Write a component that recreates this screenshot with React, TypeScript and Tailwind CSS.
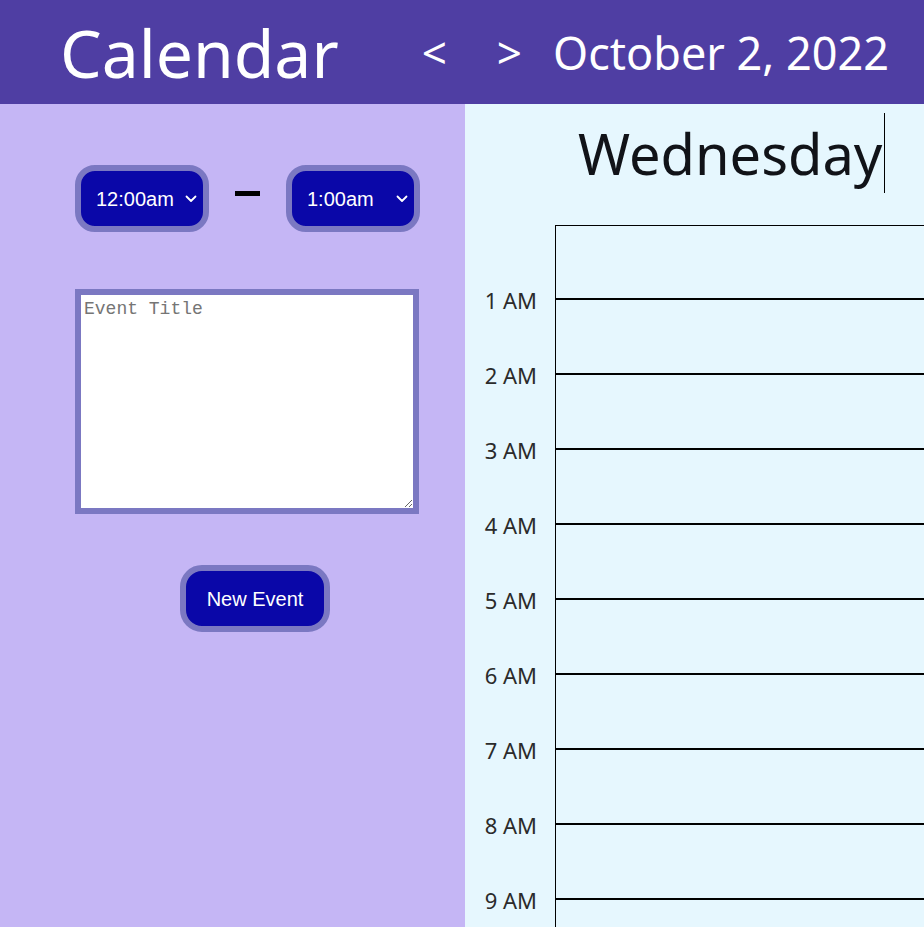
import { useState } from "react";

const hours = Array.from({ length: 24 }, (_, i) => {
  const h = i % 12 === 0 ? 12 : i % 12;
  return `${h} ${i < 12 ? "AM" : "PM"}`;
});

const times = Array.from({ length: 24 }, (_, i) => {
  const h = i % 12 === 0 ? 12 : i % 12;
  return `${h}:00${i < 12 ? "am" : "pm"}`;
});

// rows visible in the window: midnight through 9 AM
const visibleRows = 9;

function Chevron() {
  return (
    <svg width="12" height="8" viewBox="0 0 12 8" className="pointer-events-none absolute top-1/2 -translate-y-1/2 right-[12px]">
      <path d="M1.5 1.5 L6 6 L10.5 1.5" stroke="white" strokeWidth="1.8" fill="none" strokeLinecap="round" strokeLinejoin="round" />
    </svg>
  );
}

function TimeSelect({ value, onChange }: { value: string; onChange: (v: string) => void }) {
  return (
    <div className="relative">
      <select
        value={value}
        onChange={(e) => onChange(e.target.value)}
        className="appearance-none w-[134px] h-[67px] rounded-[20px] border-[6px] border-[#7b78c2] bg-[#0a07a8] text-white text-[20px] pl-[15px] pr-[20px] outline-none font-['Liberation_Sans',Arial,sans-serif]"
      >
        {times.map((t) => (
          <option key={t} value={t}>
            {t}
          </option>
        ))}
      </select>
      <Chevron />
    </div>
  );
}

export default function App() {
  const [start, setStart] = useState("12:00am");
  const [end, setEnd] = useState("1:00am");

  return (
    <div className="h-[927px] w-full overflow-hidden flex flex-col font-['Noto_Sans',sans-serif]">
      {/* Header */}
      <header className="h-[104px] shrink-0 bg-[#4f3ea3] text-white flex items-center">
        <h1 className="ml-[60px] text-[66px] leading-none">Calendar</h1>
        <button className="ml-[83px] text-[44px] leading-none">&lt;</button>
        <button className="ml-[50px] text-[44px] leading-none">&gt;</button>
        <div className="ml-[31px] text-[45px] leading-none">October 2, 2022</div>
      </header>

      <div className="flex flex-1 min-h-0">
        {/* Sidebar */}
        <aside className="w-[465px] shrink-0 bg-[#c5b6f5] pt-[61px] pl-[75px]">
          <div className="flex items-center">
            <TimeSelect value={start} onChange={setStart} />
            <div className="mx-[26px] mb-[10px] w-[25px] h-[5px] bg-black" />
            <TimeSelect value={end} onChange={setEnd} />
          </div>
          <textarea
            placeholder="Event Title"
            className="mt-[57px] block w-[344px] h-[225px] border-[6px] border-[#7b78c2] bg-white px-[3px] py-[3px] text-[18px] leading-[22px] outline-none placeholder:text-[#757575] font-['Liberation_Mono',monospace]"
          />
          <button className="mt-[51px] ml-[105px] w-[150px] h-[67px] rounded-[22px] border-[6px] border-[#7b78c2] bg-[#0a07a8] text-white text-[20px] font-['Liberation_Sans',Arial,sans-serif]">
            New Event
          </button>
        </aside>

        {/* Day view */}
        <main className="flex-1 min-w-0 bg-[#e6f7fe] flex flex-col">
          <div className="shrink-0 pt-[9px] pl-[113px] h-[121px]">
            <span className="inline-block whitespace-nowrap text-[56px] leading-[80px] text-[#111318] border-r border-black pr-[2px]">
              Wednesday
            </span>
          </div>
          <div className="flex flex-col flex-1">
            {hours.slice(0, visibleRows).map((h, i) => (
              <div key={h} className="flex shrink-0 h-[75px]">
                <div className="w-[90px] shrink-0 flex items-end justify-end pr-[18px]">
                  <span className="text-[22px] leading-[24px] text-[#2b2b2b] translate-y-[12px]">{hours[i + 1]}</span>
                </div>
                <div className={`flex-1 border-l border-black border-b-2 ${i === 0 ? "border-t" : ""}`} />
              </div>
            ))}
            <div className="flex flex-1">
              <div className="w-[90px] shrink-0" />
              <div className="flex-1 border-l border-black" />
            </div>
          </div>
        </main>
      </div>
    </div>
  );
}
